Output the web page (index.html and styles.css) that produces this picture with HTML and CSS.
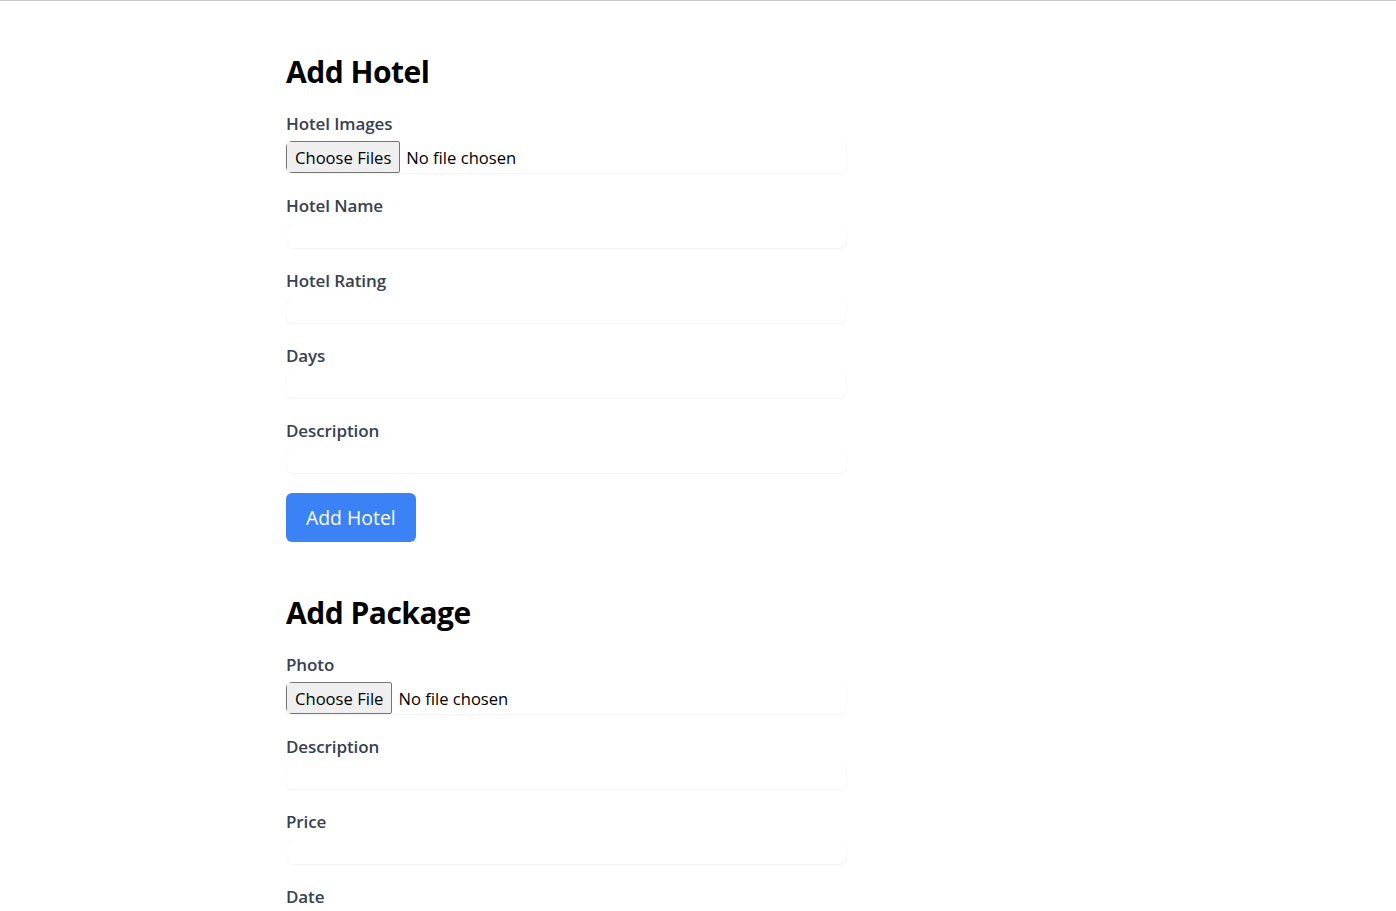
FILE: index.html
```html
<!DOCTYPE html>
<html lang="en">
<head>
<meta charset="utf-8">
<title>Add Hotel</title>
<link rel="stylesheet" href="styles.css">
</head>
<body>
<main class="page">
  <section class="section">
    <h2 class="title">Add Hotel</h2>
    <form class="form">
      <div class="field">
        <label class="label" for="hotel-images">Hotel Images</label>
        <input class="file" id="hotel-images" type="file" multiple>
      </div>
      <div class="field">
        <label class="label" for="hotel-name">Hotel Name</label>
        <input class="input" id="hotel-name" type="text">
      </div>
      <div class="field">
        <label class="label" for="hotel-rating">Hotel Rating</label>
        <input class="input" id="hotel-rating" type="text">
      </div>
      <div class="field">
        <label class="label" for="hotel-days">Days</label>
        <input class="input" id="hotel-days" type="text">
      </div>
      <div class="field">
        <label class="label" for="hotel-desc">Description</label>
        <input class="input" id="hotel-desc" type="text">
      </div>
      <button class="btn" type="button">Add Hotel</button>
    </form>
  </section>
  <section class="section">
    <h2 class="title">Add Package</h2>
    <form class="form">
      <div class="field">
        <label class="label" for="pkg-photo">Photo</label>
        <input class="file" id="pkg-photo" type="file">
      </div>
      <div class="field">
        <label class="label" for="pkg-desc">Description</label>
        <input class="input" id="pkg-desc" type="text">
      </div>
      <div class="field">
        <label class="label" for="pkg-price">Price</label>
        <input class="input" id="pkg-price" type="text">
      </div>
      <div class="field">
        <label class="label" for="pkg-date">Date</label>
        <input class="input" id="pkg-date" type="text">
      </div>
    </form>
  </section>
</main>
</body>
</html>
```
FILE: styles.css
```css
* { box-sizing: border-box; }
html, body { margin: 0; padding: 0; }
body {
  font-family: "Open Sans", "Noto Sans", sans-serif;
  font-size: 16px;
  line-height: 24px;
  color: #000;
  background: #fff;
  border-top: 1px solid #c9c9c9;
}
.page {
  width: 560px;
  margin-left: 286px;
  padding-bottom: 60px;
}
.section {
  padding-top: 53px;
}
.section + .section {
  padding-top: 53px;
}
.title {
  margin: 0 0 20px;
  font-size: 30px;
  line-height: 36px;
  font-weight: 700;
  letter-spacing: -0.5px;
  color: #000;
}
.form { margin: 0; }
.field {
  display: flex;
  flex-direction: column;
  margin-bottom: 19px;
}
.label {
  font-size: 17px;
  line-height: 28px;
  font-weight: 600;
  letter-spacing: -0.1px;
  color: #374151;
  margin-bottom: 4px;
}
.input, .file {
  width: 100%;
  border: 0;
  border-radius: 6px;
  box-shadow: 0 1px 2px 0 rgba(0, 0, 0, 0.05), 0 0 1px rgba(0,0,0,0.06);
  font: inherit;
  background: #fff;
  padding: 0;
  margin: 0;
}
.input { height: 24px; }
.file {
  height: 32px;
  margin-top: -1px;
  color: #000;
  font-size: 16.6px;
  line-height: 32px;
}
.file::file-selector-button {
  font: inherit;
  height: 32px;
  margin: 0 6px 0 0;
  padding: 0 8px;
  background: #efefef;
  color: #000;
  border: 1px solid #767676;
  border-radius: 2px;
}
.btn {
  margin-top: 1px;
  font-family: inherit;
  font-size: 19.4px;
  line-height: 29px;
  padding: 10px 20px;
  background: #3b82f6;
  color: #fff;
  border: 0;
  border-radius: 6px;
  cursor: pointer;
}
```
